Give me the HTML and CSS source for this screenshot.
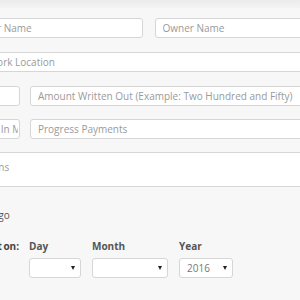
FILE: index.html
```html
<!DOCTYPE html>
<html>
<head>
    <title>Contract Form</title>
    <link rel="stylesheet" href="styles.css">
</head>
<body>
    <div class="top-band"></div>
    <form class="contract">
        <div class="row two">
            <input type="text" class="first" placeholder="Contractor Name">
            <input type="text" placeholder="Owner Name">
        </div>
        <div class="row">
            <input type="text" placeholder="Jobsite Work Location">
        </div>
        <div class="row split">
            <input type="text" class="small" placeholder="Amount">
            <input type="text" placeholder="Amount Written Out (Example: Two Hundred and Fifty)">
        </div>
        <div class="row split">
            <input type="text" class="small" placeholder="Payment In Monthly">
            <input type="text" placeholder="Progress Payments">
        </div>
        <div class="row">
            <textarea placeholder="Instructions"></textarea>
        </div>
        <p class="note">2 months ago</p>
        <div class="date-row">
            <div class="date-label">First Payment on:</div>
            <div class="field">
                <label>Day</label>
                <span class="select-wrap day"><select><option></option></select></span>
            </div>
            <div class="field">
                <label>Month</label>
                <span class="select-wrap month"><select><option></option></select></span>
            </div>
            <div class="field">
                <label>Year</label>
                <span class="select-wrap year"><select><option>2016</option></select></span>
            </div>
        </div>
    </form>
</body>
</html>
```

FILE: styles.css
```css
body {
    margin: 0;
    background-color: #f7f7f7;
    font-family: "Open Sans", Arial, sans-serif;
    font-size: 10px;
    color: #555;
    overflow: hidden;
}

.top-band {
    height: 8px;
    background: linear-gradient(#ebebeb, #f3f3f3);
}

.contract {
    margin-left: -54px;
    width: 408px;
    padding-top: 10px;
}

.row {
    display: flex;
    gap: 12px;
    margin-bottom: 14px;
}

.row.split {
    gap: 10px;
    margin-bottom: 13px;
}

.row.two input {
    flex: 1;
}

input[type="text"],
textarea {
    flex: 1;
    min-width: 0;
    height: 20px;
    box-sizing: border-box;
    padding: 0 7px;
    border: 1px solid #d6d6d6;
    border-radius: 3px;
    background-color: #fff;
    font-family: "Open Sans", Arial, sans-serif;
    font-size: 10px;
    color: #555;
}

input.first {
    padding-left: 4px;
}

input.small {
    flex: none;
    width: 74px;
    padding: 0 1px 0 10px;
}

textarea {
    height: 35px;
    padding-top: 7px;
    resize: none;
}

::placeholder {
    color: #9a9a9a;
}

.note {
    margin: 21px 0 0;
    line-height: 14px;
    color: #555;
}

.date-row {
    display: flex;
    gap: 11px;
    margin-top: 17px;
}

.date-label {
    width: 73px;
    margin-right: -1px;
    display: flex;
    justify-content: flex-end;
    font-weight: bold;
    line-height: 14px;
    word-spacing: -1px;
    color: #444;
    white-space: nowrap;
}

.field label {
    display: block;
    font-weight: bold;
    line-height: 14px;
    margin-bottom: 5px;
    color: #555;
}

.select-wrap {
    position: relative;
    display: block;
}

.select-wrap::after {
    content: "";
    position: absolute;
    right: 6px;
    top: 8px;
    border-left: 2px solid transparent;
    border-right: 2px solid transparent;
    border-top: 4px solid #222;
}

select {
    appearance: none;
    -webkit-appearance: none;
    height: 20px;
    border: 1px solid #d6d6d6;
    border-radius: 3px;
    background-color: #fff;
    padding: 0 7px;
    font-family: "Open Sans", Arial, sans-serif;
    font-size: 10px;
    color: #777;
}

.day select { width: 52px; }
.month select { width: 76px; }
.year select { width: 54px; }
```
